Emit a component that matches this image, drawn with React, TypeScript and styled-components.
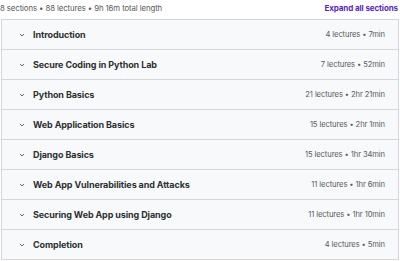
import React from "react";
import styled, { createGlobalStyle } from "styled-components";

const GlobalStyle = createGlobalStyle`
  html, body {
    margin: 0;
    padding: 0;
    background: #ffffff;
    font-family: Inter, "Noto Sans", sans-serif;
    color: #2d2f31;
  }
`;

const Page = styled.div`
  display: flex;
  flex-direction: column;
  width: 400px;
`;

const TopBar = styled.div`
  display: flex;
  justify-content: space-between;
  align-items: center;
  height: 15px;
  padding: 0 2px 0 0;
  margin-bottom: 4px;
`;

const Summary = styled.span`
  font-size: 7.8px;
  color: #585c60;
  letter-spacing: -0.1px;
`;

const ExpandAll = styled.span`
  font-size: 8px;
  font-weight: 700;
  color: #5624d0;
  letter-spacing: -0.1px;
`;

const Curriculum = styled.div`
  display: flex;
  flex-direction: column;
  border: 1px solid #d1d7dc;
  border-bottom: none;
  margin: 0 1px;
`;

const SectionRow = styled.div`
  display: flex;
  align-items: center;
  height: 29px;
  padding: 0 13px 0 17px;
  background: #f7f9fa;
  border-bottom: 1px solid #d1d7dc;
`;

const Chevron = styled.svg`
  width: 6px;
  height: 6px;
  margin-right: 8px;
  flex-shrink: 0;
`;

const Title = styled.span`
  flex: 1;
  font-size: 9px;
  font-weight: 700;
  color: #2d2f31;
  letter-spacing: -0.1px;
`;

const Meta = styled.span`
  font-size: 7.6px;
  color: #585c60;
  letter-spacing: -0.1px;
`;

const sections = [
  { title: "Introduction", meta: "4 lectures • 7min" },
  { title: "Secure Coding in Python Lab", meta: "7 lectures • 52min" },
  { title: "Python Basics", meta: "21 lectures • 2hr 21min" },
  { title: "Web Application Basics", meta: "15 lectures • 2hr 1min" },
  { title: "Django Basics", meta: "15 lectures • 1hr 34min" },
  { title: "Web App Vulnerabilities and Attacks", meta: "11 lectures • 1hr 6min" },
  { title: "Securing Web App using Django", meta: "11 lectures • 1hr 10min" },
  { title: "Completion", meta: "4 lectures • 5min" },
];

const ChevronDown = () => (
  <Chevron viewBox="0 0 6 6">
    <path d="M1.2 2.2 L3 4 L4.8 2.2" fill="none" stroke="#3e4143" strokeWidth="0.8" strokeLinecap="round" strokeLinejoin="round" />
  </Chevron>
);

export default function App() {
  return (
    <Page>
      <GlobalStyle />
      <TopBar>
        <Summary>8 sections • 88 lectures • 9h 16m total length</Summary>
        <ExpandAll>Expand all sections</ExpandAll>
      </TopBar>
      <Curriculum>
        {sections.map((s) => (
          <SectionRow key={s.title}>
            <ChevronDown />
            <Title>{s.title}</Title>
            <Meta>{s.meta}</Meta>
          </SectionRow>
        ))}
      </Curriculum>
    </Page>
  );
}
